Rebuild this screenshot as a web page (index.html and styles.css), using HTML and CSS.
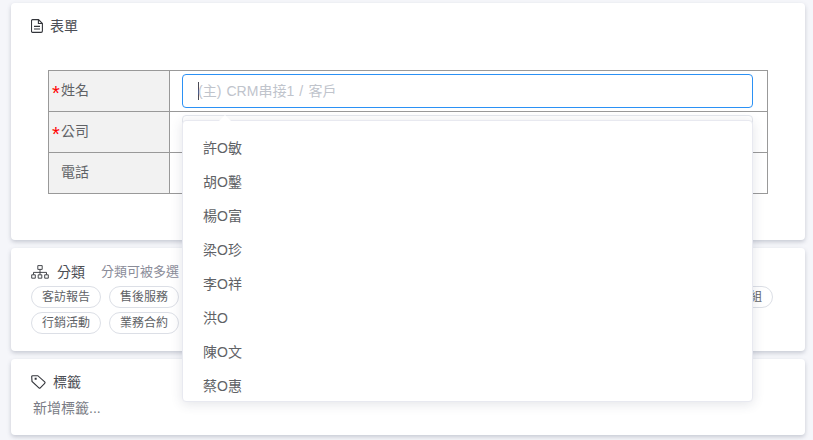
FILE: index.html
```html
<!DOCTYPE html>
<html lang="zh-Hant">
<head>
<meta charset="utf-8">
<title>表單</title>
<link rel="stylesheet" href="styles.css">
</head>
<body>
<main class="page">
  <section class="card card-form">
    <h2 class="title">
      <svg class="icon" width="12" height="14" viewBox="0 0 12 14"><path d="M1.5.6h6l3.9 3.9v7.6a1.3 1.3 0 0 1-1.3 1.3H1.5a1.3 1.3 0 0 1-1-1.3V1.9A1.3 1.3 0 0 1 1.5.6z M7.4.6v3.9h4 M3 7.4h6 M3 10h6"/></svg>
      <span>表單</span>
    </h2>
    <table class="form-table">
      <tr>
        <th><span class="req">*</span>姓名</th>
        <td>
          <div class="input input-focus"><span class="caret"></span><span class="placeholder">(主) CRM串接1 / 客戶</span></div>
        </td>
      </tr>
      <tr>
        <th><span class="req">*</span>公司</th>
        <td><div class="input"></div></td>
      </tr>
      <tr>
        <th><span class="req req-none">*</span>電話</th>
        <td><div class="input"></div></td>
      </tr>
    </table>
  </section>

  <section class="card card-cat">
    <h2 class="title">
      <svg class="icon icon-thin" width="18" height="14" viewBox="0 0 18 14"><path d="M6.8.6h4.4v3.8H6.8z M9 4.4v3 M2.5 9.6V7.4h13v2.2 M9 7.4v2.2 M.7 9.8h3.6v3.4H.7z M7.2 9.8h3.6v3.4H7.2z M13.7 9.8h3.6v3.4h-3.6z"/></svg>
      <span>分類</span>
      <small class="hint">分類可被多選</small>
    </h2>
    <div class="chips">
      <span class="chip">客訪報告</span>
      <span class="chip">售後服務</span>
      <span class="chip"></span>
      <span class="chip"></span>
      <span class="chip"></span>
      <span class="chip"></span>
      <span class="chip"></span>
      <span class="chip"></span>
      <span class="chip chip-short"></span>
      <span class="chip">業務小組</span>
      <span class="chip">行銷活動</span>
      <span class="chip">業務合約</span>
    </div>
  </section>

  <section class="card card-tag">
    <h2 class="title">
      <svg class="icon" width="15" height="14" viewBox="0 0 15 14"><path d="M1.8.7h5l6.9 6.2a1 1 0 0 1 0 1.4l-4.4 4.5a1 1 0 0 1-1.4 0L1 6.4 .7 1.8a1 1 0 0 1 1.1-1.1z M4.2 3.2h.9v.9h-.9z"/></svg>
      <span>標籤</span>
    </h2>
    <p class="tag-input">新增標籤...</p>
  </section>
</main>

<div class="dropdown">
  <span class="arrow"></span>
  <ul class="options">
    <li>許O敏</li>
    <li>胡O鑿</li>
    <li>楊O富</li>
    <li>梁O珍</li>
    <li>李O祥</li>
    <li>洪O</li>
    <li>陳O文</li>
    <li>蔡O惠</li>
  </ul>
</div>
</body>
</html>
```
FILE: styles.css
```css
* { box-sizing: border-box; }
html, body { margin: 0; height: 100%; overflow: hidden; }
body {
  background: #f5f6fa;
  color: #606266;
  font: 14px/20px "Liberation Sans", "Noto Sans CJK TC", sans-serif;
}
.page {
  display: flex;
  flex-direction: column;
  gap: 8px;
  width: 794px;
  margin: 3px 0 0 11px;
}
.card {
  background: #fff;
  border-radius: 4px;
  box-shadow: 0 2px 4px rgba(80, 85, 110, .28);
  padding: 0 20px;
}
.card-form { height: 237px; padding-top: 14px; }
.card-cat { height: 103px; padding-top: 15px; }
.card-tag { height: 76px; padding-top: 14px; }
.title {
  display: flex;
  align-items: center;
  margin: 0;
  font-size: 14px;
  font-weight: 400;
  line-height: 18px;
  color: #4c4e55;
}
.icon {
  flex: none;
  fill: none;
  stroke: #33353b;
  stroke-width: 1.1;
  margin-right: 7px;
}
.icon-thin { stroke-width: .9; }
.card-cat .icon { margin-right: 8px; }
.card-tag .icon { margin-right: 7px; }
.hint {
  margin-left: 16px;
  font-size: 13px;
  color: #8a8c99;
}
.form-table {
  margin: 35px 0 0 17px;
  width: 720px;
  border-collapse: collapse;
  table-layout: fixed;
}
.form-table th, .form-table td {
  height: 41px;
  padding: 0;
  border: 1px solid #999;
}
.form-table th {
  width: 121px;
  background: #f2f2f2;
  font-weight: 400;
  text-align: left;
  padding: 0 0 2px 3px;
}
.form-table td { padding: 0 14px 0 12px; }
.req {
  display: inline-block;
  width: 9px;
  color: #f00;
  font-size: 20px;
  line-height: 0;
  vertical-align: -5px;
}
.req-none { visibility: hidden; }
.input {
  display: flex;
  align-items: center;
  height: 34px;
  padding-left: 15px;
  background: #fff;
  border: 1px solid #e4e7ed;
  border-radius: 4px;
}
.input-focus { border-color: #2b91f5; }
.caret {
  width: 1px;
  height: 18px;
  margin-right: -1px;
  background: #4a4a55;
}
.placeholder { color: #c0c4cc; word-spacing: 1.3px; }
.chips {
  display: flex;
  flex-wrap: wrap;
  gap: 4px 8px;
  margin-top: 5px;
}
.chip {
  width: 70px;
  height: 22px;
  border: 1px solid #dcdfe6;
  border-radius: 11px;
  font-size: 12px;
  line-height: 20px;
  text-align: center;
  color: #606266;
}
.chip-short { width: 40px; }
.tag-input {
  margin: 7px 0 0 2px;
  line-height: 20px;
  color: #7a7c85;
}
.dropdown {
  position: absolute;
  left: 182px;
  top: 120px;
  width: 571px;
  height: 282px;
  background: #fff;
  border: 1px solid #e8e9f0;
  border-radius: 4px;
  box-shadow: 0 2px 12px rgba(60, 65, 90, .14);
}
.arrow {
  position: absolute;
  left: 36px;
  top: -6px;
  width: 0;
  height: 0;
  border-left: 6px solid transparent;
  border-right: 6px solid transparent;
  border-bottom: 6px solid #fff;
}
.options {
  list-style: none;
  margin: 0;
  padding: 10px 0 0;
  height: 280px;
  overflow: hidden;
}
.options li {
  height: 34px;
  line-height: 34px;
  padding-left: 20px;
  color: #606266;
}
```
